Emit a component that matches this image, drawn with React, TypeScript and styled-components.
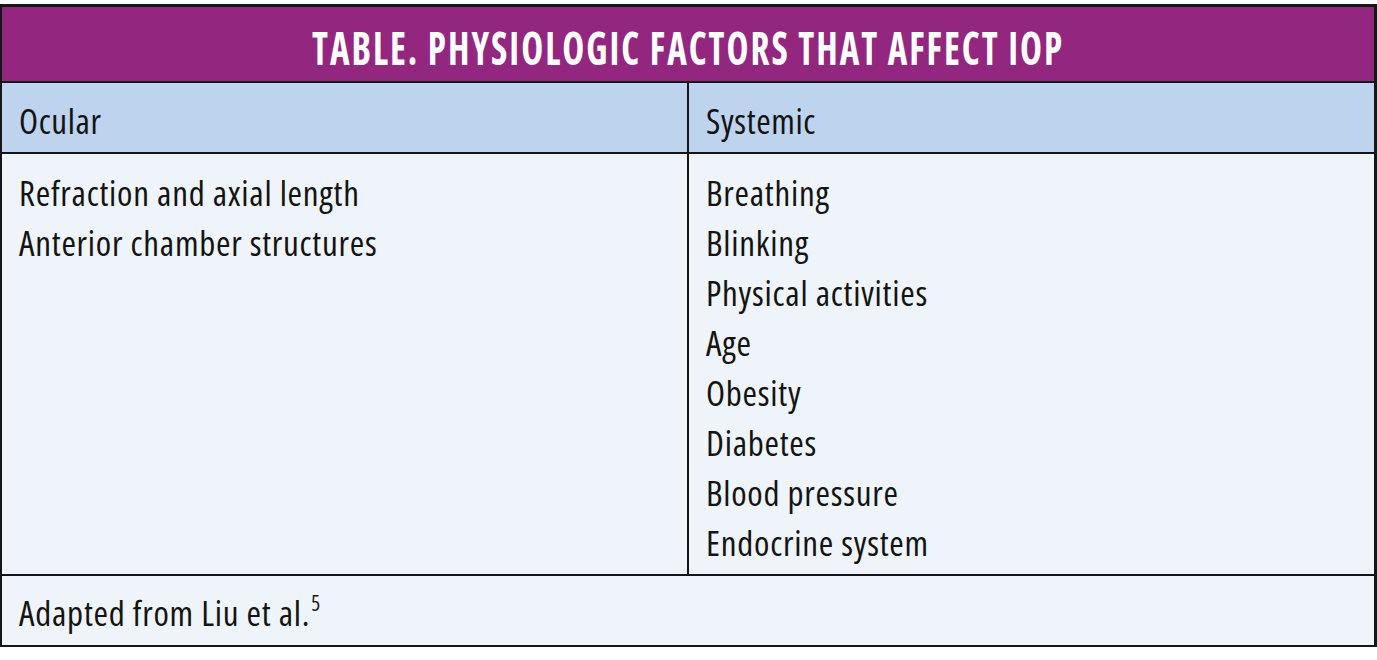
import styled, { createGlobalStyle } from "styled-components";

const GlobalStyle = createGlobalStyle`
  html, body {
    margin: 0;
    padding: 0;
    background: #ffffff;
  }
  body {
    font-family: "Open Sans", "Roboto", "DejaVu Sans Condensed", sans-serif;
    font-stretch: 75%;
    color: #141414;
  }
`;

const Frame = styled.div`
  box-sizing: border-box;
  width: 1377px;
  margin-top: 4px;
  border: 2px solid #161616;
  border-top-width: 3px;
  border-right-width: 3px;
`;

const TitleBand = styled.div`
  height: 74px;
  background: #93267f;
  border-bottom: 2px solid #161616;
  display: flex;
  align-items: center;
  justify-content: center;
`;

/* the printed face is narrower than any installed condensed cut */
const TitleText = styled.h1`
  margin: 0;
  color: #ffffff;
  font-size: 47px;
  font-weight: 700;
  letter-spacing: 2.5px;
  line-height: 1;
  white-space: nowrap;
  padding-top: 6px;
  transform: scaleX(0.79);
`;

const Row = styled.div<{ $bg: string; $height: number; $last?: boolean }>`
  display: grid;
  grid-template-columns: 687px 1fr;
  height: ${(p) => p.$height}px;
  background: ${(p) => p.$bg};
  border-bottom: ${(p) => (p.$last ? "none" : "2px solid #161616")};
`;

const Cell = styled.div<{ $divider?: boolean; $padTop: number }>`
  box-sizing: border-box;
  padding: ${(p) => p.$padTop}px 0 0 17px;
  border-right: ${(p) => (p.$divider ? "2px solid #161616" : "none")};
`;

const FullCell = styled.div<{ $padTop: number }>`
  grid-column: 1 / -1;
  padding: ${(p) => p.$padTop}px 0 0 17px;
`;

const HeadText = styled.div`
  font-size: 35px;
  font-weight: 450;
  line-height: 50px;
  letter-spacing: 0.6px;
`;

const Line = styled.div`
  font-size: 35px;
  font-weight: 390;
  line-height: 50px;
  letter-spacing: 0.75px;
  white-space: nowrap;
`;

const Sup = styled.sup`
  font-size: 21px;
  line-height: 0;
  vertical-align: 15px;
  margin-left: 1px;
`;

const ocular = ["Refraction and axial length", "Anterior chamber structures"];

const systemic = [
  "Breathing",
  "Blinking",
  "Physical activities",
  "Age",
  "Obesity",
  "Diabetes",
  "Blood pressure",
  "Endocrine system",
];

export default function App() {
  return (
    <>
      <GlobalStyle />
      <Frame>
        <TitleBand>
          <TitleText>TABLE. PHYSIOLOGIC FACTORS THAT AFFECT IOP</TitleText>
        </TitleBand>

        <Row $bg="#bed3ee" $height={69}>
          <Cell $divider $padTop={13}>
            <HeadText>Ocular</HeadText>
          </Cell>
          <Cell $padTop={13}>
            <HeadText>Systemic</HeadText>
          </Cell>
        </Row>

        <Row $bg="#eff4fa" $height={420}>
          <Cell $divider $padTop={14}>
            {ocular.map((item) => (
              <Line key={item}>{item}</Line>
            ))}
          </Cell>
          <Cell $padTop={14}>
            {systemic.map((item) => (
              <Line key={item}>{item}</Line>
            ))}
          </Cell>
        </Row>

        <Row $bg="#eff4fa" $height={69} $last>
          <FullCell $padTop={12}>
            <Line>
              Adapted from Liu et al.<Sup>5</Sup>
            </Line>
          </FullCell>
        </Row>
      </Frame>
    </>
  );
}
